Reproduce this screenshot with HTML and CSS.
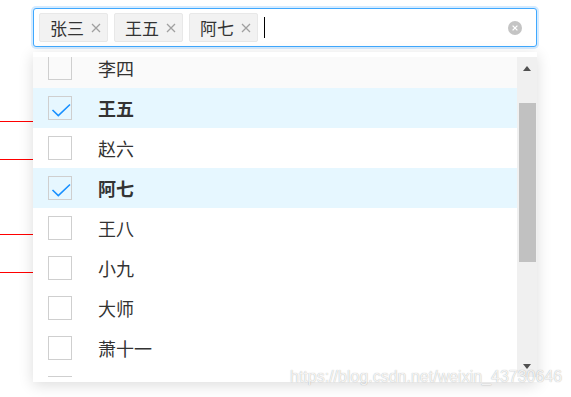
FILE: index.html
```html
<!DOCTYPE html>
<html>
<head>
  <meta charset="UTF-8">
  <title>多选下拉</title>
  <link rel="stylesheet" href="styles.css">
</head>
<body>
  <div class="page">
    <!-- fond : lignes rouges derriere le menu -->
    <div class="bg-lines">
      <div class="red-line first"></div>
      <div class="red-line"></div>
      <div class="red-line gap"></div>
      <div class="red-line"></div>
    </div>

    <div class="select">
      <div class="select-input">
        <span class="tag"><span class="tag-text">张三</span><svg class="tag-close" width="10" height="10" viewBox="0 0 10 10"><path d="M1 1L9 9M9 1L1 9"/></svg></span>
        <span class="tag"><span class="tag-text">王五</span><svg class="tag-close" width="10" height="10" viewBox="0 0 10 10"><path d="M1 1L9 9M9 1L1 9"/></svg></span>
        <span class="tag"><span class="tag-text">阿七</span><svg class="tag-close" width="10" height="10" viewBox="0 0 10 10"><path d="M1 1L9 9M9 1L1 9"/></svg></span>
        <span class="caret"></span>
        <span class="clear"><svg width="14" height="14" viewBox="0 0 14 14"><circle cx="7" cy="7" r="7" fill="#c4c4c4"/><path d="M4.6 4.6L9.4 9.4M9.4 4.6L4.6 9.4" stroke="#fff" stroke-width="1.3"/></svg></span>
      </div>

      <div class="dropdown">
        <div class="viewport">
          <ul class="options">
            <li class="option selected"><span class="box"></span>张三</li>
            <li class="option hover"><span class="box"></span>李四</li>
            <li class="option selected"><span class="box"><svg width="24" height="24" viewBox="0 0 24 24"><path d="M4.5 14L10.3 19.6L22 8.5"/></svg></span>王五</li>
            <li class="option"><span class="box"></span>赵六</li>
            <li class="option selected"><span class="box"><svg width="24" height="24" viewBox="0 0 24 24"><path d="M4.5 14L10.3 19.6L22 8.5"/></svg></span>阿七</li>
            <li class="option"><span class="box"></span>王八</li>
            <li class="option"><span class="box"></span>小九</li>
            <li class="option"><span class="box"></span>大师</li>
            <li class="option"><span class="box"></span>萧十一</li>
            <li class="option"><span class="box"></span>刘十二</li>
            <li class="option"><span class="box"></span>陈十三</li>
          </ul>
          <div class="scrollbar">
            <div class="sb-btn"><span class="arrow-up"></span></div>
            <div class="sb-track"><div class="sb-thumb"></div></div>
            <div class="sb-btn"><span class="arrow-down"></span></div>
          </div>
        </div>
      </div>
    </div>

    <div class="watermark">https://blog.csdn.net/weixin_43730646</div>
  </div>
</body>
</html>
```

FILE: styles.css
```css
body {
  margin: 0;
  padding: 0;
  background: #fff;
  font-family: "Noto Sans CJK SC", "Liberation Sans", sans-serif;
  color: #333;
}

.page {
  position: relative;
  width: 571px;
  height: 397px;
  overflow: hidden;
}

/* fond */
.bg-lines {
  position: absolute;
  left: 0;
  top: 0;
  width: 200px;
}
.red-line {
  height: 1px;
  background: #f00;
  margin-top: 37px;
}
.red-line.first {
  margin-top: 121px;
}
.red-line.gap {
  margin-top: 74px;
}

/* champ de selection */
.select {
  position: relative;
  margin: 8px 0 0 33px;
  width: 504px;
}

.select-input {
  box-sizing: border-box;
  height: 39px;
  border: 1px solid #40a9ff;
  border-radius: 3px;
  box-shadow: 0 0 0 2px rgba(24, 144, 255, 0.18);
  background: #fff;
  display: flex;
  align-items: center;
  gap: 6px;
  padding: 0 5px;
}

.tag {
  box-sizing: border-box;
  height: 29px;
  display: flex;
  align-items: center;
  gap: 7px;
  padding: 0 6px 0 10px;
  background: #f2f2f2;
  border: 1px solid #e8e8e8;
  border-radius: 2px;
  font-size: 17px;
  color: #333;
}
.tag-close path {
  stroke: #a0a0a0;
  stroke-width: 1.3;
  fill: none;
}

.caret {
  width: 1px;
  height: 21px;
  background: #000;
}

.clear {
  margin-left: auto;
  margin-right: 9px;
  display: flex;
}

/* menu deroulant */
.dropdown {
  position: absolute;
  top: 44px;
  left: 0;
  right: 0;
  background: #fff;
  padding: 5px 0;
  box-shadow: 0 3px 14px rgba(0, 0, 0, 0.14);
  z-index: 2;
}

.viewport {
  display: flex;
  height: 320px;
  overflow: hidden;
}

.options {
  flex: 1;
  list-style: none;
  margin: -49px 0 0 0;
  padding: 0;
}

.option {
  height: 40px;
  display: flex;
  align-items: center;
  padding-left: 15px;
  gap: 26px;
  font-size: 18px;
  color: #333;
}
.option.hover {
  background: #fafafa;
}
.option.selected {
  background: #e6f7ff;
  font-weight: bold;
}

.box {
  box-sizing: border-box;
  width: 24px;
  height: 24px;
  border: 1px solid #cfcfcf;
  background: transparent;
  position: relative;
}
.box svg {
  position: absolute;
  left: -1px;
  top: -1px;
}
.box path {
  fill: none;
  stroke: #1890ff;
  stroke-width: 1.6;
}

/* barre de defilement */
.scrollbar {
  width: 20px;
  background: #f0f0f0;
  display: flex;
  flex-direction: column;
}
.sb-btn {
  height: 22px;
  display: flex;
  align-items: center;
  justify-content: center;
}
.arrow-up {
  width: 0;
  height: 0;
  border-left: 4.5px solid transparent;
  border-right: 4.5px solid transparent;
  border-bottom: 5px solid #505050;
}
.arrow-down {
  width: 0;
  height: 0;
  border-left: 4.5px solid transparent;
  border-right: 4.5px solid transparent;
  border-top: 5px solid #505050;
}
.sb-track {
  flex: 1;
}
.sb-thumb {
  margin: 24px 1px 0 2px;
  height: 159px;
  background: #c1c1c1;
}

/* filigrane */
.watermark {
  position: absolute;
  left: 290px;
  top: 368px;
  z-index: 3;
  font-family: "Liberation Sans", Arial, sans-serif;
  font-size: 16px;
  color: rgba(255, 255, 255, 0.85);
  text-shadow: 0 0 1px rgba(0, 0, 0, 0.35);
  white-space: nowrap;
}
```
